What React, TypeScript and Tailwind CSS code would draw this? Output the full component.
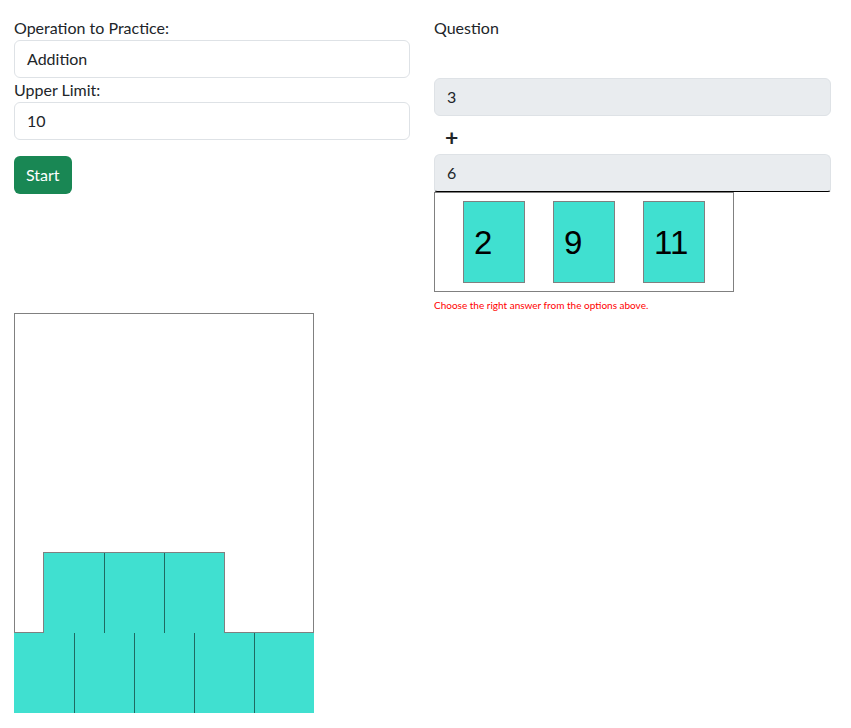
import React from "react";

const font = { fontFamily: "Lato, 'Noto Sans', sans-serif" };

function Block({ first }: { first?: boolean }) {
  return (
    <div
      className={
        "h-full w-[60px] bg-[#40e0d0] " +
        (first ? "" : "border-l border-[#1e6a62]")
      }
    />
  );
}

function Card({ n }: { n: number }) {
  return (
    <div className="w-[62px] h-[82px] bg-[#40e0d0] border border-[#808080] flex items-center pl-[10px] text-[33px] text-black font-['Liberation_Sans',Arial,sans-serif] leading-none">
      {n}
    </div>
  );
}

export default function App() {
  return (
    <div className="bg-white w-[851px] h-[728px] text-[#212529] overflow-hidden" style={font}>
      <div className="px-[14px] pt-[16px]">
        <div className="flex gap-[24px]">
          <div className="w-[396px] flex flex-col">
            <label className="text-[16px] leading-[24px] h-[24px]">Operation to Practice:</label>
            <div className="h-[38px] border border-[#dee2e6] rounded-[6px] px-[12px] flex items-center text-[16px]">
              Addition
            </div>
            <label className="text-[16px] leading-[24px] h-[24px]">Upper Limit:</label>
            <div className="h-[38px] border border-[#dee2e6] rounded-[6px] px-[12px] flex items-center text-[16px]">
              10
            </div>
            <div className="mt-[16px]">
              <button className="h-[38px] px-[12px] rounded-[6px] bg-[#198754] text-white text-[16px]">
                Start
              </button>
            </div>
          </div>
          <div className="w-[397px] flex flex-col">
            <label className="text-[16px] leading-[24px] h-[24px]">Question</label>
            <div className="h-[38px]" />
            <div className="h-[38px] border border-[#dee2e6] bg-[#e9ecef] rounded-[6px] px-[12px] flex items-center text-[16px]">
              3
            </div>
            <div className="h-[38px] flex items-center pt-[5px] pl-[11px] text-[23px] font-bold leading-none text-[#212529]">
              +
            </div>
            <div className="h-[38px] border border-[#dee2e6] border-b-black bg-[#e9ecef] rounded-t-[6px] rounded-b-[3px] px-[12px] flex items-center text-[16px]">
              6
            </div>
            <div className="w-[300px] h-[100px] border border-[#808080] flex gap-[28px] pl-[28px] pt-[8px]">
              <Card n={2} />
              <Card n={9} />
              <Card n={11} />
            </div>
            <p className="pt-[6px] text-[10px] leading-[15px] text-[#ff0000]">
              Choose the right answer from the options above.
            </p>
          </div>
        </div>
        <div className="w-[300px] h-[320px] border border-[#808080] flex flex-col justify-end">
          <div className="ml-[28px] -mb-[2px] w-[182px] h-[82px] border border-[#808080] flex">
            <Block first />
            <Block />
            <Block />
          </div>
        </div>
        <div className="w-[300px] h-[80px] flex">
          <Block first />
          <Block />
          <Block />
          <Block />
          <Block />
        </div>
      </div>
    </div>
  );
}
